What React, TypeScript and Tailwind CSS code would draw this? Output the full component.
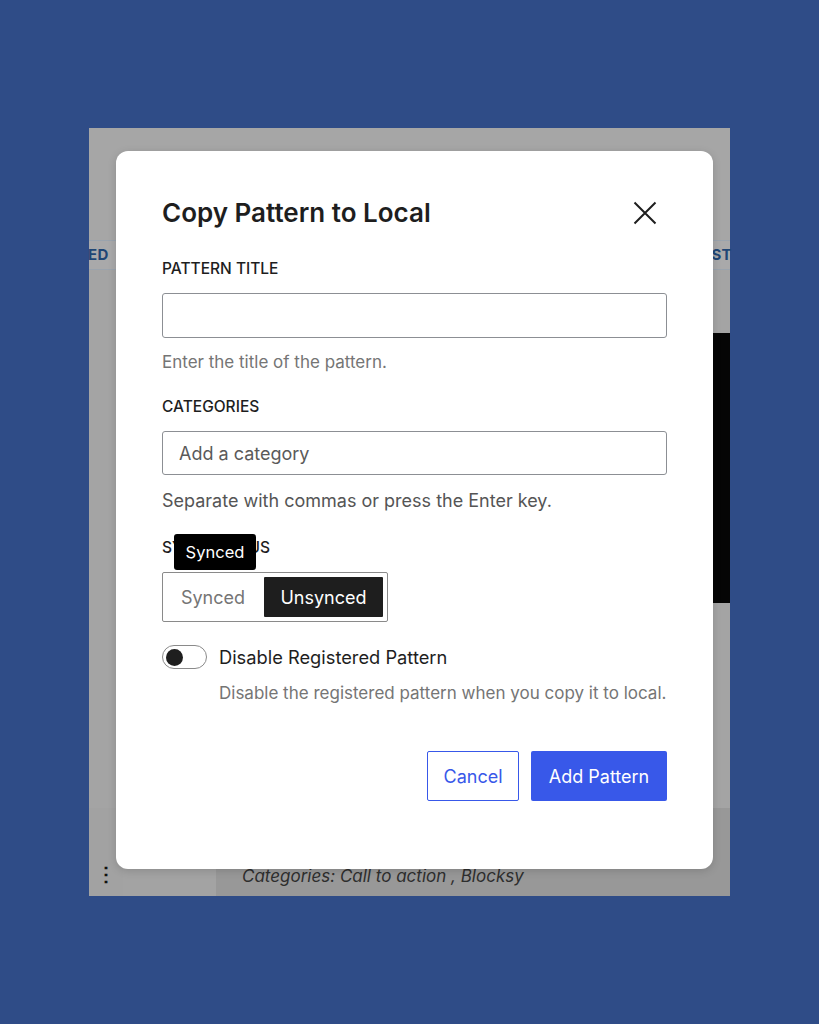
import { useState } from "react";

const FONT = { fontFamily: "Inter, 'Noto Sans', sans-serif" };

function CloseIcon() {
  return (
    <svg width="24" height="24" viewBox="0 0 24 24" fill="none">
      <path d="M1.5 1.5L22.5 22.5M22.5 1.5L1.5 22.5" stroke="#1e1e1e" strokeWidth="2" />
    </svg>
  );
}

function Backdrop() {
  // the dimmed editor screen that sits behind the modal
  return (
    <div className="flex h-[768px] w-[641px] flex-col bg-[#a4a4a4]">
      <div className="h-[112px] bg-[#a6a6a6]" />
      <div className="flex h-[30px] items-center justify-between border-y border-[#9aa3ad] bg-[#a9a9aa] text-[15px] font-bold tracking-wide text-[#1f4675]">
        <span className="-ml-[1px]">ED</span>
        <span className="mr-[-2px]">ST</span>
      </div>
      <div className="flex h-[538px] flex-col items-end pt-[63px]">
        <div className="h-[270px] w-[60px] bg-[#050505]" />
      </div>
      <div className="flex h-[88px] bg-[#9c9c9c]">
        <div className="flex w-[34px] items-end justify-center bg-[#a2a2a2] pb-[12px] text-[20px] font-bold leading-[20px] text-[#111]">
          ⋮
        </div>
        <div className="w-[93px] bg-[#a3a3a3]" />
        <div className="flex flex-1 items-end bg-[#989898] pb-[7px] pl-[26px] text-[17px] italic text-[#2e2e2e]">
          Categories: Call to action , Blocksy
        </div>
      </div>
    </div>
  );
}

export default function App() {
  const [status, setStatus] = useState<"synced" | "unsynced">("unsynced");
  const [disabled, setDisabled] = useState(false);
  const [title, setTitle] = useState("");
  const [category, setCategory] = useState("");

  return (
    <div className="flex h-[1024px] w-full justify-center bg-[#2f4c87] pt-[128px]" style={FONT}>
      <div className="relative h-[768px] w-[641px]">
        <Backdrop />

        {/* Modal */}
        <div className="absolute left-[27px] top-[23px] h-[718px] w-[597px] rounded-[12px] bg-white px-[46px] pt-[46px] shadow-[0_2px_8px_rgba(0,0,0,0.15)]">
          <div className="flex h-[32px] items-center justify-between">
            <h1 className="text-[26px] font-semibold leading-[32px] text-[#1e1e1e]">
              Copy Pattern to Local
            </h1>
            <button className="mr-[10px] flex h-[24px] w-[24px] items-center justify-center">
              <CloseIcon />
            </button>
          </div>

          <label className="mt-[30px] block text-[15.5px] font-medium uppercase leading-[20px] text-[#1e1e1e]">
            Pattern Title
          </label>
          <input
            value={title}
            onChange={(e) => setTitle(e.target.value)}
            className="mt-[14px] block h-[45px] w-full rounded-[3px] border border-[#8c8f94] px-[16px] text-[18px] text-[#1e1e1e] outline-none"
          />
          <p className="mt-[13px] text-[17px] leading-[22px] text-[#757575]">
            Enter the title of the pattern.
          </p>

          <label className="mt-[24px] block text-[15.5px] font-medium uppercase leading-[20px] text-[#1e1e1e]">
            Categories
          </label>
          <input
            value={category}
            onChange={(e) => setCategory(e.target.value)}
            placeholder="Add a category"
            className="mt-[14px] block h-[44px] w-full rounded-[3px] border border-[#8c8f94] px-[16px] text-[18px] text-[#1e1e1e] outline-none placeholder:text-[#5a5a5a]"
          />
          <p className="mt-[14px] text-[18px] leading-[24px] text-[#555]">
            Separate with commas or press the Enter key.
          </p>

          <div className="relative mt-[25px]">
            <label className="block text-[15.5px] font-medium uppercase leading-[20px] text-[#1e1e1e]">
              Sync Status
            </label>
            <div className="absolute left-[12px] top-[-4px] flex h-[36px] w-[82px] items-center justify-center rounded-[3px] bg-black text-[16.5px] text-white">
              Synced
            </div>
            <div className="mt-[14px] flex h-[50px] w-[226px] gap-[5px] rounded-[2px] border border-[#8a8a8a] p-[4px]">
              <button
                onClick={() => setStatus("synced")}
                className={
                  status === "synced"
                    ? "w-[92px] rounded-[1px] bg-[#1e1e1e] text-[18px] text-white"
                    : "w-[92px] text-[18px] text-[#757575]"
                }
              >
                Synced
              </button>
              <button
                onClick={() => setStatus("unsynced")}
                className={
                  status === "unsynced"
                    ? "w-[119px] rounded-[1px] bg-[#1e1e1e] text-[18px] text-white"
                    : "w-[119px] text-[18px] text-[#757575]"
                }
              >
                Unsynced
              </button>
            </div>
          </div>

          <div className="mt-[23px] flex items-center gap-[12px]">
            <button
              onClick={() => setDisabled(!disabled)}
              className={
                disabled
                  ? "flex h-[24px] w-[45px] items-center justify-end rounded-full border border-[#3858e9] bg-[#3858e9] px-[3px]"
                  : "flex h-[24px] w-[45px] items-center rounded-full border border-[#8a8a8a] bg-white px-[3px]"
              }
            >
              <span className={disabled ? "h-[17px] w-[17px] rounded-full bg-white" : "h-[17px] w-[17px] rounded-full bg-[#1e1e1e]"} />
            </button>
            <span className="text-[18.3px] leading-[24px] text-[#1e1e1e]">Disable Registered Pattern</span>
          </div>
          <p className="ml-[57px] mt-[13px] text-[17px] leading-[22px] text-[#757575]">
            Disable the registered pattern when you copy it to local.
          </p>

          <div className="mt-[47px] flex justify-end gap-[12px]">
            <button className="h-[50px] w-[92px] rounded-[2px] border-[1.5px] border-[#3858e9] bg-white text-[18px] text-[#3858e9]">
              Cancel
            </button>
            <button className="h-[50px] w-[136px] rounded-[2px] bg-[#3858e9] text-[18px] text-white">
              Add Pattern
            </button>
          </div>
        </div>
      </div>
    </div>
  );
}
